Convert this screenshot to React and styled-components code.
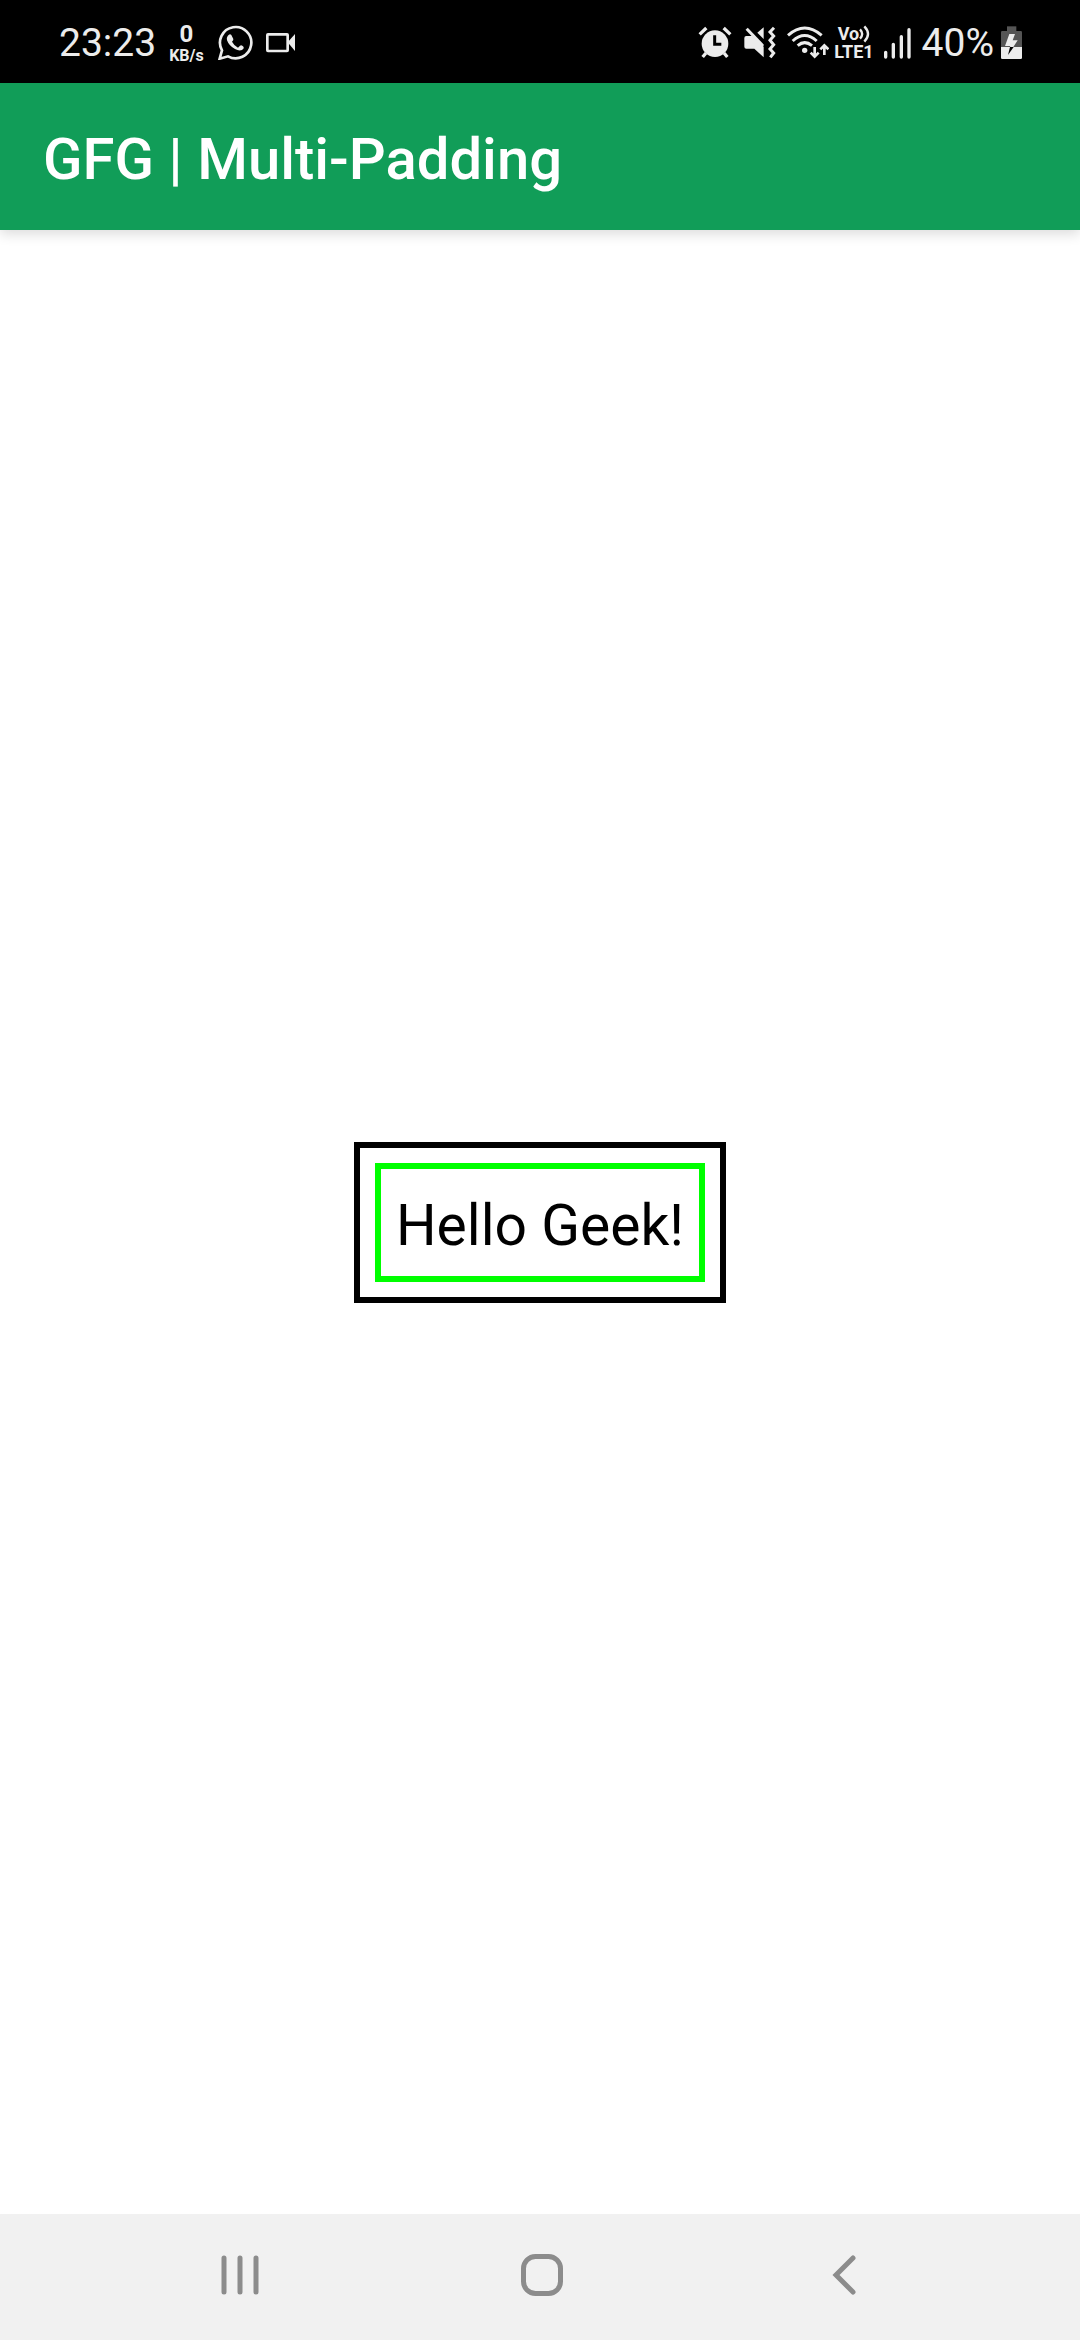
import React from "react";
import styled, { createGlobalStyle } from "styled-components";

const GlobalStyle = createGlobalStyle`
  * { box-sizing: border-box; }
  body { margin: 0; background: #ffffff; font-family: Roboto, "Noto Sans", sans-serif; }
`;

const Screen = styled.div`
  display: flex;
  flex-direction: column;
  min-height: 100vh;
`;

const StatusBar = styled.header`
  display: flex;
  align-items: center;
  justify-content: space-between;
  height: 83px;
  padding: 2px 58px 0 59px;
  background: #000000;
  color: #ececec;
`;

const StatusGroup = styled.div`
  display: flex;
  align-items: center;
  gap: ${(p) => p.$gap}px;
`;

const StatusText = styled.span`
  font-size: 39px;
  line-height: 48px;
`;

const Stack = styled.div`
  display: flex;
  flex-direction: column;
  align-items: center;
  font-weight: 700;
`;

const Speed = styled.span`
  font-size: 24px;
  line-height: 26px;
`;

const Tiny = styled.span`
  display: flex;
  align-items: center;
  font-size: ${(p) => p.$size}px;
  line-height: 18px;
`;

const Icon = styled.svg`
  display: block;
  flex: none;
`;

const AppBar = styled.div`
  position: relative;
  display: flex;
  align-items: center;
  height: 147px;
  padding: 4px 43px 0;
  background: #119d58;
  box-shadow: 0 4px 12px rgba(0, 0, 0, 0.14);
`;

const Title = styled.h1`
  margin: 0;
  color: #ffffff;
  font-size: 58px;
  line-height: 72px;
  font-weight: 500;
`;

const Content = styled.main`
  flex: 1;
  display: flex;
  align-items: center;
  justify-content: center;
`;

const OuterBorder = styled.div`
  padding: 15px;
  border: 6px solid #000000;
`;

const InnerBorder = styled.div`
  padding: 18px 15px 12px;
  border: 6px solid #00ff00;
`;

const Greeting = styled.p`
  margin: 0;
  color: #000000;
  font-size: 57px;
  line-height: 77px;
`;

const NavBar = styled.nav`
  display: flex;
  height: 126px;
  padding: 0 85px 0 89px;
  background: #f1f1f1;
`;

const NavButton = styled.button`
  flex: 1;
  display: flex;
  align-items: center;
  justify-content: center;
  padding: 0 0 4px;
  border: 0;
  background: transparent;
  color: #8c8c8c;
`;

function StatusIcon({ x, width, children }) {
  return (
    <Icon
      width={width}
      height={35}
      viewBox={`${x} 75 ${width * 3} 105`}
      fill="none"
      stroke="#ececec"
      aria-hidden="true"
    >
      {children}
    </Icon>
  );
}

const WhatsApp = () => (
  <StatusIcon x={528} width={36}>
    <path d="M536 176 543 151A47 47 0 1 1 561 169Z" strokeWidth="8" />
    <path
      d="M560 108Q566 100 571 105L577 117Q578 121 573 125Q580 138 591 143L597 137Q600 135 604 137L608 141Q610 146 603 150Q594 154 582 147Q564 138 558 121Q556 113 560 108Z"
      fill="#ececec"
      stroke="none"
    />
  </StatusIcon>
);

const VideoCamera = () => (
  <StatusIcon x={681} width={29}>
    <rect x="685" y="103" width="61" height="50" rx="2" strokeWidth="8" />
    <path d="M746 127 768 102V153Z" fill="#ececec" stroke="none" />
  </StatusIcon>
);

const Alarm = () => (
  <StatusIcon x={51} width={34}>
    <circle cx="102" cy="131" r="40" fill="#ececec" stroke="none" />
    <path d="M56 103 76 84M128 84 148 103M75 159 65 171M129 159 139 171" strokeWidth="10" />
    <path d="M101 106V133H121" stroke="#000000" strokeWidth="9" />
  </StatusIcon>
);

const MuteVibrate = () => (
  <StatusIcon x={189} width={33}>
    <path d="M196 108H214L248 140V172L220 146H196Q190 146 190 140V114Q190 108 196 108Z" fill="#ececec" stroke="none" />
    <path d="M197 86 246 138" strokeWidth="9" />
    <path d="M229 98 248 82V117Z" fill="#ececec" stroke="none" />
    <path d="M279 83 267 96 278 108 267 121 278 134 267 147 278 159 268 172" strokeWidth="9" />
  </StatusIcon>
);

const Wifi = () => (
  <StatusIcon x={320} width={42}>
    <path d="M323 106Q373 62 424 106M337 123Q373 90 409 123M352 137Q373 119 395 137" strokeWidth="9" />
    <circle cx="373" cy="151" r="8" fill="#ececec" stroke="none" />
    <path d="M403 141V169M391 158 403 170 415 158M432 165V137M420 148 432 136 444 148" strokeWidth="8" />
  </StatusIcon>
);

const VoiceWaves = () => (
  <Icon width="11" height="18" viewBox="0 0 33 54" fill="none" stroke="#ececec" strokeWidth="7" aria-hidden="true">
    <path d="M3 13Q16 27 3 41M16 4Q38 27 16 50" />
  </Icon>
);

const Signal = () => (
  <StatusIcon x={63} width={28}>
    <path d="M68 157V171M91 133V171M115 110V171M138 89V171" strokeWidth="10" strokeLinecap="round" />
  </StatusIcon>
);

const Battery = () => (
  <StatusIcon x={420} width={21}>
    <path d="M438 79H466V93H438Z" fill="#555555" stroke="none" />
    <path d="M424 93H479Q483 93 483 97V141H420V97Q420 93 424 93Z" fill="#555555" stroke="none" />
    <path d="M420 141H483V173Q483 177 479 177H424Q420 177 420 173Z" fill="#ececec" stroke="none" />
    <path d="M445 102H462L455 121H470L457 141H447L448 138H432Z" fill="#ececec" stroke="none" />
    <path d="M447 141H458L441 165Z" fill="#000000" stroke="none" />
  </StatusIcon>
);

export default function App() {
  return (
    <Screen>
      <GlobalStyle />
      <StatusBar>
        <StatusGroup $gap={13}>
          <StatusText>23:23</StatusText>
          <Stack>
            <Speed>0</Speed>
            <Tiny $size={16}>KB/s</Tiny>
          </Stack>
          <WhatsApp />
          <VideoCamera />
        </StatusGroup>
        <StatusGroup $gap={10}>
          <StatusGroup $gap={12}>
            <Alarm />
            <MuteVibrate />
          </StatusGroup>
          <StatusGroup $gap={5}>
            <Wifi />
            <Stack>
              <Tiny $size={18}>
                Vo
                <VoiceWaves />
              </Tiny>
              <Tiny $size={18}>LTE1</Tiny>
            </Stack>
          </StatusGroup>
          <Signal />
          <StatusGroup $gap={7}>
            <StatusText>40%</StatusText>
            <Battery />
          </StatusGroup>
        </StatusGroup>
      </StatusBar>
      <AppBar>
        <Title>GFG | Multi-Padding</Title>
      </AppBar>
      <Content>
        <OuterBorder>
          <InnerBorder>
            <Greeting>Hello Geek!</Greeting>
          </InnerBorder>
        </OuterBorder>
      </Content>
      <NavBar>
        <NavButton aria-label="Recent apps">
          <Icon width="38" height="40" viewBox="0 0 38 40" stroke="currentColor" strokeWidth="5" strokeLinecap="round">
            <path d="M3 3V37M19 3V37M35 3V37" />
          </Icon>
        </NavButton>
        <NavButton aria-label="Home">
          <Icon width="42" height="42" viewBox="0 0 42 42" fill="none" stroke="currentColor" strokeWidth="5">
            <rect x="2.5" y="2.5" width="37" height="37" rx="12" />
          </Icon>
        </NavButton>
        <NavButton aria-label="Back">
          <Icon width="24" height="40" viewBox="0 0 24 40" fill="none" stroke="currentColor" strokeWidth="5" strokeLinecap="round">
            <path d="M21 3 4 20 21 37" />
          </Icon>
        </NavButton>
      </NavBar>
    </Screen>
  );
}
